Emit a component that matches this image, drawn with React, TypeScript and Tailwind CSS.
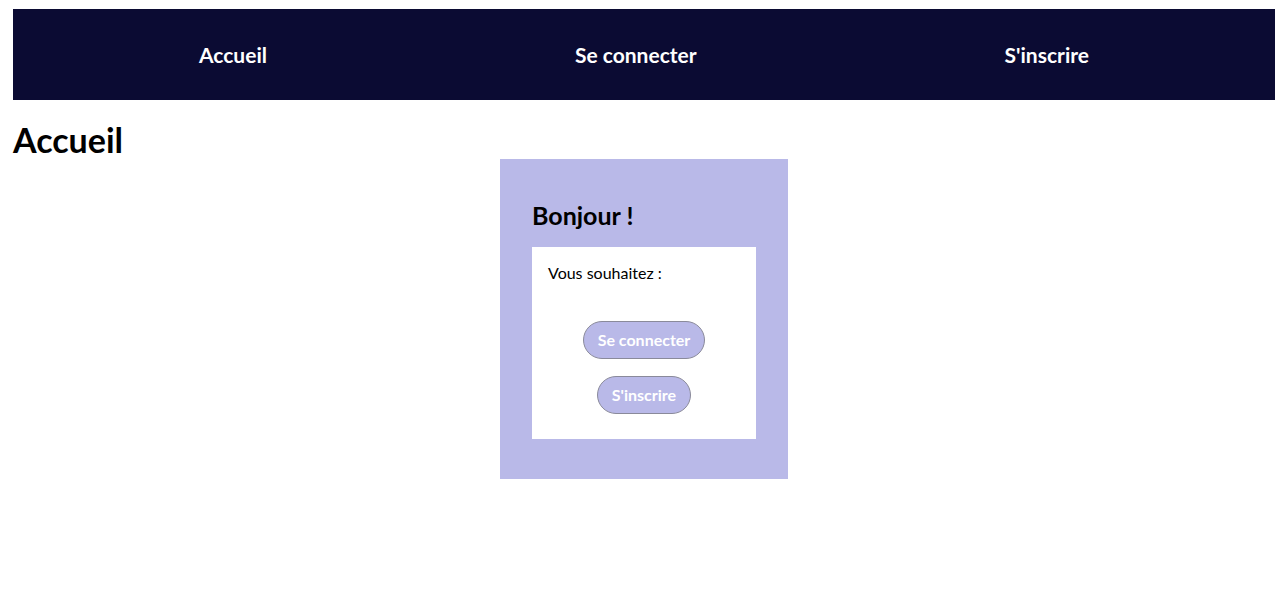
export default function App() {
  const font = { fontFamily: '"Lato", "Noto Sans", sans-serif' }
  return (
    <div className="min-h-[615px] bg-white px-[13px] pt-[9px] text-black" style={font}>
      <nav className="flex h-[91px] items-center justify-around bg-[#0b0b33] px-8">
        <a className="text-[21px] font-bold text-white">Accueil</a>
        <a className="text-[21px] font-bold text-white">Se connecter</a>
        <a className="text-[21px] font-bold text-white">S'inscrire</a>
      </nav>
      <h1 className="mt-[21px] text-[34px] font-bold leading-[38px]">Accueil</h1>
      <div className="mx-auto w-[288px] bg-[#b9b9e8] px-8 pt-10 pb-10">
        <h2 className="mb-4 text-[25px] font-bold leading-8">Bonjour !</h2>
        <div className="flex flex-col bg-white px-4 pt-[14px] pb-[25px]">
          <p className="text-[16px] leading-6">Vous souhaitez :</p>
          <div className="mt-9 flex flex-col items-center gap-[17px]">
            <button className="h-[38px] rounded-full border border-[#8a8a9a] bg-[#b9b9e8] px-[14px] text-[16px] font-bold text-white">
              Se connecter
            </button>
            <button className="h-[38px] rounded-full border border-[#8a8a9a] bg-[#b9b9e8] px-[14px] text-[16px] font-bold text-white">
              S'inscrire
            </button>
          </div>
        </div>
      </div>
    </div>
  )
}
